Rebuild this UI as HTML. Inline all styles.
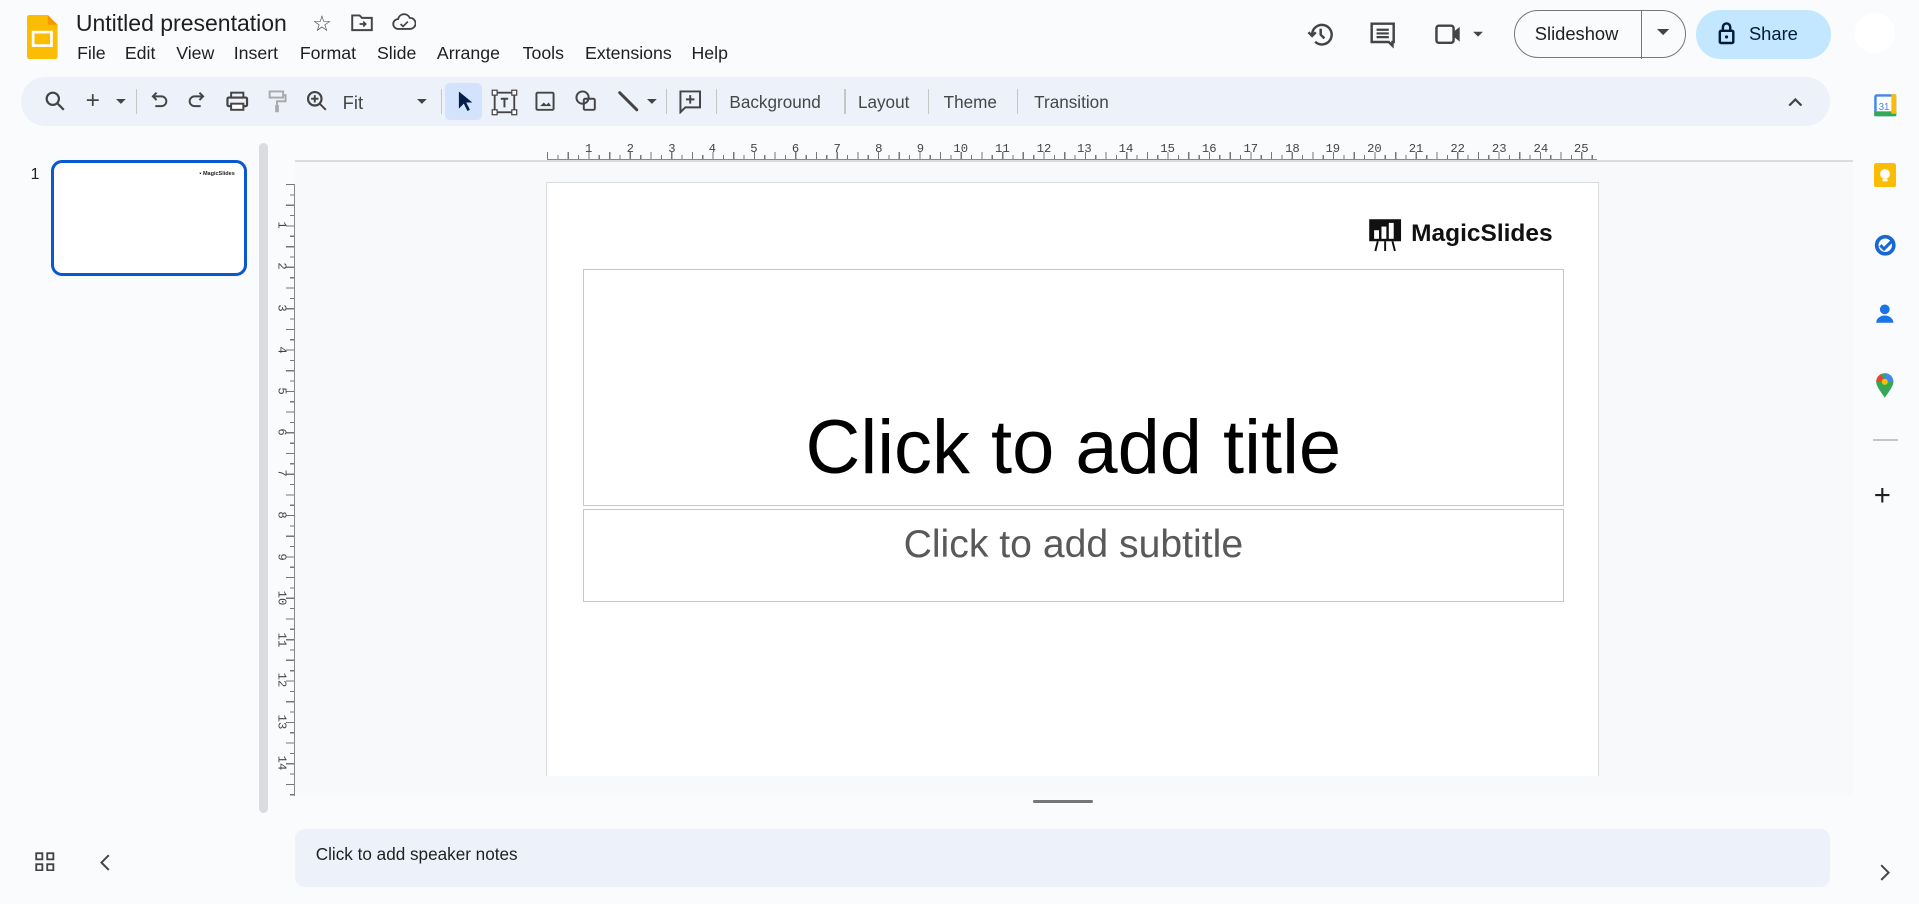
<!DOCTYPE html>
<html><head><meta charset="utf-8"><style>
html,body{margin:0;padding:0;}
body{width:1568px;height:739px;zoom:1.2239;background:#f9fbfd;font-family:"Liberation Sans",Arial,sans-serif;color:#1f1f1f;position:relative;overflow:hidden;}
.a{position:absolute;}
.menu span{position:absolute;top:0;}
.tb{left:17px;top:63px;width:1478px;height:40px;background:#edf2fa;border-radius:20px;}
.ic{position:absolute;top:10px;}
.sep{position:absolute;top:10px;width:1px;height:20px;background:#c4c7c5;}
.tt{position:absolute;top:12px;font-size:14px;color:#444746;}
.hr span{position:absolute;top:1px;font-size:10px;font-family:"Liberation Mono",monospace;color:#444;}
.vr span{position:absolute;left:2px;font-size:10px;font-family:"Liberation Mono",monospace;color:#444;transform:rotate(90deg);}
</style></head><body>
<svg class="a" style="left:22px;top:12px" width="25" height="36" viewBox="0 0 25 36"><path d="M2 0h15l8 8v26a2 2 0 0 1-2 2H2a2 2 0 0 1-2-2V2a2 2 0 0 1 2-2z" fill="#fbbc04"/><path d="M17 0l8 8h-8z" fill="#f29900"/><rect x="5" y="14" width="15" height="11" fill="none" stroke="#fff" stroke-width="2.2"/></svg>
<div class="a" style="left:62px;top:8px;font-size:18.8px;color:#1f1f1f">Untitled presentation</div>
<div class="a" style="left:255px;top:9px;font-size:18px;color:#444">☆</div>
<svg class="a" style="left:287px;top:11px" width="18" height="16" viewBox="0 0 18 16"><path d="M1 2h6l2 2h8v10H1z" fill="none" stroke="#444" stroke-width="1.6"/><path d="M7 9h5M10 7l2 2-2 2" stroke="#444" stroke-width="1.4" fill="none"/></svg>
<svg class="a" style="left:320px;top:11px" width="20" height="15" viewBox="0 0 20 15"><path d="M5 13a4 4 0 0 1 0-8 5 5 0 0 1 9.5-1A4.5 4.5 0 0 1 15 13z" fill="none" stroke="#444" stroke-width="1.5"/><path d="M7 9l2 2 4-4" fill="none" stroke="#444" stroke-width="1.4"/></svg>
<div class="a menu" style="left:0;top:35px;font-size:14.5px;color:#1f1f1f"><span style="left:63px">File</span><span style="left:102px">Edit</span><span style="left:144px">View</span><span style="left:191px">Insert</span><span style="left:245px">Format</span><span style="left:308px">Slide</span><span style="left:357px">Arrange</span><span style="left:427px">Tools</span><span style="left:478px">Extensions</span><span style="left:565px">Help</span></div>
<svg class="a" style="left:1067px;top:16px" width="24" height="24" viewBox="0 0 24 24"><path d="M5 12a8 8 0 1 1 2.5 5.8" fill="none" stroke="#444" stroke-width="2"/><path d="M2 10l3 3 3-3" fill="none" stroke="#444" stroke-width="2"/><path d="M12 7v5l3 3" fill="none" stroke="#444" stroke-width="2"/></svg>
<svg class="a" style="left:1118px;top:16px" width="24" height="24" viewBox="0 0 24 24"><path d="M3 3h18v15h-1v3l-3-3H3z" fill="none" stroke="#444" stroke-width="2"/><path d="M7 8h10M7 11h10M7 14h10" stroke="#444" stroke-width="1.8"/></svg>
<svg class="a" style="left:1172px;top:18px" width="40" height="20" viewBox="0 0 40 20"><rect x="2" y="3" width="14" height="14" rx="2" fill="none" stroke="#444" stroke-width="2"/><path d="M16 8l5-4v12l-5-4z" fill="#444"/><path d="M32 8h8l-4 4z" fill="#444"/></svg>
<div class="a" style="left:1237px;top:8px;width:139px;height:38px;border:1px solid #747775;border-radius:20px;"></div>
<div class="a" style="left:1341px;top:8px;width:1px;height:40px;background:#747775"></div>
<div class="a" style="left:1254px;top:19px;font-size:15px;color:#1f1f1f">Slideshow</div>
<svg class="a" style="left:1354px;top:24px" width="10" height="6"><path d="M0 0h10L5 5z" fill="#444"/></svg>
<div class="a" style="left:1386px;top:8px;width:110px;height:40px;background:#c2e7ff;border-radius:20px;"></div>
<svg class="a" style="left:1404px;top:17px" width="14" height="20" viewBox="0 0 14 20"><rect x="1.5" y="8" width="11" height="10" rx="1" fill="none" stroke="#001d35" stroke-width="2"/><path d="M4 8V5a3 3 0 0 1 6 0v3" fill="none" stroke="#001d35" stroke-width="2"/><circle cx="7" cy="13" r="1.3" fill="#001d35"/></svg>
<div class="a" style="left:1429px;top:19px;font-size:15px;color:#001d35">Share</div>
<div class="a" style="left:1516px;top:11px;width:32px;height:32px;border-radius:50%;background:#fff"></div>
<div class="a tb">
<svg class="ic" style="left:18px" width="20" height="20" viewBox="0 0 20 20"><circle cx="8" cy="8" r="5" fill="none" stroke="#444" stroke-width="1.8"/><path d="M12 12l5 5" stroke="#444" stroke-width="1.8"/></svg>
<div class="tt" style="left:53px;top:8px;font-size:20px">+</div><svg class="ic" style="left:78px;top:18px" width="8" height="5"><path d="M0 0h8L4 4z" fill="#444"/></svg>
<div class="sep" style="left:94px"></div>
<svg class="ic" style="left:104px" width="18" height="20" viewBox="0 0 18 20"><path d="M5 6h6a4 4 0 0 1 0 8H6" fill="none" stroke="#444" stroke-width="1.6"/><path d="M7 3L4 6l3 3" fill="none" stroke="#444" stroke-width="1.6"/></svg>
<svg class="ic" style="left:135px" width="18" height="20" viewBox="0 0 18 20"><path d="M13 6H7a4 4 0 0 0 0 8h5" fill="none" stroke="#444" stroke-width="1.6"/><path d="M11 3l3 3-3 3" fill="none" stroke="#444" stroke-width="1.6"/></svg>
<svg class="ic" style="left:167px" width="20" height="20" viewBox="0 0 20 20"><rect x="2" y="7" width="16" height="7" rx="1" fill="none" stroke="#444" stroke-width="1.8"/><rect x="5" y="3" width="10" height="4" fill="none" stroke="#444" stroke-width="1.6"/><rect x="5" y="12" width="10" height="5" fill="#fff" stroke="#444" stroke-width="1.6"/></svg>
<svg class="ic" style="left:200px" width="18" height="20" viewBox="0 0 18 20"><rect x="3" y="2" width="11" height="5" fill="none" stroke="#aaa" stroke-width="1.6"/><path d="M14 5h2v5H9v3" fill="none" stroke="#aaa" stroke-width="1.6"/><rect x="7.5" y="13" width="3" height="6" fill="#aaa"/></svg>
<svg class="ic" style="left:232px" width="20" height="20" viewBox="0 0 20 20"><circle cx="8" cy="8" r="5.5" fill="none" stroke="#444" stroke-width="1.8"/><path d="M12 12l5 5M8 5v6M5 8h6" stroke="#444" stroke-width="1.6"/></svg>
<div class="tt" style="left:263px;font-size:15px">Fit</div><svg class="ic" style="left:324px;top:18px" width="8" height="5"><path d="M0 0h8L4 4z" fill="#444"/></svg>
<div class="sep" style="left:343px"></div>
<div class="a" style="left:347px;top:5px;width:30px;height:30px;background:#d3e3fd;border-radius:4px"></div>
<svg class="ic" style="left:354px" width="16" height="20" viewBox="0 0 16 20"><path d="M4 2v14l4-4 3 6 2-1-3-6h5z" fill="#041e49"/></svg>
<svg class="ic" style="left:384px" width="22" height="22" viewBox="0 0 22 22"><rect x="3" y="3" width="16" height="16" fill="none" stroke="#444" stroke-width="1.5"/><rect x="1" y="1" width="4" height="4" fill="#fff" stroke="#444"/><rect x="17" y="1" width="4" height="4" fill="#fff" stroke="#444"/><rect x="1" y="17" width="4" height="4" fill="#fff" stroke="#444"/><rect x="17" y="17" width="4" height="4" fill="#fff" stroke="#444"/><path d="M8 8h6M11 8v7" stroke="#444" stroke-width="1.6"/></svg>
<svg class="ic" style="left:419px" width="18" height="20" viewBox="0 0 18 20"><rect x="2" y="3" width="14" height="14" rx="1" fill="none" stroke="#444" stroke-width="1.6"/><path d="M5 14l3-3 2 2 2-2 2 3z" fill="#444"/></svg>
<svg class="ic" style="left:452px" width="20" height="20" viewBox="0 0 20 20"><circle cx="7" cy="7" r="5" fill="none" stroke="#444" stroke-width="1.6"/><rect x="8" y="8" width="9" height="9" rx="1" fill="none" stroke="#444" stroke-width="1.6"/></svg>
<svg class="ic" style="left:486px" width="20" height="20" viewBox="0 0 20 20"><path d="M3 3l14 14" stroke="#444" stroke-width="2.4" stroke-linecap="round"/></svg><svg class="ic" style="left:512px;top:18px" width="8" height="5"><path d="M0 0h8L4 4z" fill="#444"/></svg>
<div class="sep" style="left:527px"></div>
<svg class="ic" style="left:537px" width="20" height="20" viewBox="0 0 20 20"><path d="M2 2h16v13H6l-4 4z" fill="none" stroke="#444" stroke-width="1.6"/><path d="M10 5v7M6.5 8.5h7" stroke="#444" stroke-width="1.6"/></svg>
<div class="sep" style="left:568px"></div>
<div class="tt" style="left:579px">Background</div>
<div class="sep" style="left:673px"></div>
<div class="tt" style="left:684px">Layout</div>
<div class="sep" style="left:741px"></div>
<div class="tt" style="left:754px">Theme</div>
<div class="sep" style="left:814px"></div>
<div class="tt" style="left:828px">Transition</div>
<svg class="ic" style="left:1444px;top:16px" width="12" height="8"><path d="M1 7l5-5 5 5" fill="none" stroke="#444" stroke-width="1.8"/></svg>
</div>
<div class="a" style="left:25px;top:136px;font-size:13px">1</div>
<div class="a" style="left:42px;top:131px;width:155px;height:90px;border:2.5px solid #0b57d0;border-radius:9px;background:#fff"></div>
<div class="a" style="left:163px;top:140px;font-size:4.5px;font-weight:bold">▪ MagicSlides</div>
<div class="a" style="left:212px;top:117px;width:7px;height:547px;background:#dadce0;border-radius:4px"></div>
<div class="a" style="left:241px;top:131px;width:1273px;height:519px;background:#f8f9fa"></div>
<div class="a hr" style="left:447px;top:115px;width:858px;height:16px;background:linear-gradient(#888,#888) bottom/100% 1px no-repeat,repeating-linear-gradient(90deg,#777 0 1px,transparent 1px 8.45px) left bottom/100% 4px no-repeat,repeating-linear-gradient(90deg,#777 0 1px,transparent 1px 16.9px) left bottom/100% 7px no-repeat;">
<span style="left:31px">1</span><span style="left:65px">2</span><span style="left:99px">3</span><span style="left:132px">4</span><span style="left:166px">5</span><span style="left:200px">6</span><span style="left:234px">7</span><span style="left:268px">8</span><span style="left:302px">9</span><span style="left:332px">10</span><span style="left:366px">11</span><span style="left:400px">12</span><span style="left:433px">13</span><span style="left:467px">14</span><span style="left:501px">15</span><span style="left:535px">16</span><span style="left:569px">17</span><span style="left:603px">18</span><span style="left:636px">19</span><span style="left:670px">20</span><span style="left:704px">21</span><span style="left:738px">22</span><span style="left:772px">23</span><span style="left:806px">24</span><span style="left:839px">25</span></div>
<div class="a" style="left:241px;top:131px;width:1273px;height:1px;background:#dadce0"></div>
<div class="a vr" style="left:225px;top:150px;width:16px;height:500px;background:linear-gradient(#888,#888) right/1px 100% no-repeat,repeating-linear-gradient(180deg,#777 0 1px,transparent 1px 8.45px) right top/4px 100% no-repeat,repeating-linear-gradient(180deg,#777 0 1px,transparent 1px 16.9px) right top/7px 100% no-repeat;">
<span style="top:28px">1</span><span style="top:62px">2</span><span style="top:96px">3</span><span style="top:130px">4</span><span style="top:164px">5</span><span style="top:197px">6</span><span style="top:231px">7</span><span style="top:265px">8</span><span style="top:299px">9</span><span style="top:333px;left:-1px">10</span><span style="top:367px;left:-1px">11</span><span style="top:400px;left:-1px">12</span><span style="top:434px;left:-1px">13</span><span style="top:468px;left:-1px">14</span></div>
<div class="a" style="left:446px;top:149px;width:859px;height:484px;background:#fff;border:1px solid #dadce0;border-bottom:none"></div>
<svg class="a" style="left:1118px;top:178px" width="28" height="28" viewBox="0 0 28 28"><rect x="1" y="1" width="26" height="18" fill="#111"/><rect x="5" y="10" width="4" height="7" fill="#fff"/><rect x="11" y="7" width="4" height="10" fill="#fff"/><rect x="17" y="4" width="4" height="13" fill="#fff"/><path d="M8 19l-2 8M14 19v8M20 19l2 8" stroke="#111" stroke-width="1.6"/></svg>
<div class="a" style="left:1153px;top:180px;font-size:20px;font-weight:bold;color:#111">MagicSlides</div>
<div class="a" style="left:476px;top:220px;width:800px;height:192px;border:1px solid #c7c7c7"></div>
<div class="a" style="left:476px;top:330px;width:802px;text-align:center;font-size:62px;color:#000">Click to add title</div>
<div class="a" style="left:476px;top:416px;width:800px;height:74px;border:1px solid #c7c7c7"></div>
<div class="a" style="left:476px;top:427px;width:802px;text-align:center;font-size:32px;color:#595959">Click to add subtitle</div>
<div class="a" style="left:844px;top:654px;width:49px;height:2px;background:#747775;border-radius:1px"></div>
<div class="a" style="left:241px;top:677px;width:1254px;height:48px;background:#edf2fa;border-radius:8px"></div>
<div class="a" style="left:258px;top:690px;font-size:14px">Click to add speaker notes</div>
<svg class="a" style="left:29px;top:696px" width="16" height="16" viewBox="0 0 16 16"><g fill="none" stroke="#444" stroke-width="1.5"><rect x="1" y="1" width="5" height="5"/><rect x="10" y="1" width="5" height="5"/><rect x="1" y="10" width="5" height="5"/><rect x="10" y="10" width="5" height="5"/></g></svg>
<svg class="a" style="left:81px;top:698px" width="10" height="14"><path d="M8 1L2 7l6 6" fill="none" stroke="#444" stroke-width="1.6"/></svg>
<svg class="a" style="left:1530px;top:76px" width="20" height="20" viewBox="0 0 20 20"><rect x="1" y="1" width="18" height="18" rx="2" fill="#4285f4"/><rect x="3" y="3" width="14" height="14" fill="#fff"/><rect x="1" y="15" width="18" height="4" fill="#34a853"/><rect x="15" y="1" width="4" height="16" fill="#fbbc04"/><text x="9" y="14" font-size="8" text-anchor="middle" fill="#4285f4" font-family="Liberation Sans">31</text></svg>
<svg class="a" style="left:1531px;top:133px" width="18" height="20" viewBox="0 0 18 20"><rect x="0" y="0" width="18" height="20" rx="2" fill="#fbbc04"/><circle cx="9" cy="9" r="4" fill="#fff"/><rect x="7" y="13" width="4" height="2" fill="#fff"/></svg>
<svg class="a" style="left:1530px;top:190px" width="20" height="20" viewBox="0 0 20 20"><circle cx="10" cy="10" r="7" fill="none" stroke="#1967d2" stroke-width="3"/><path d="M6 10l3 3 7-7" fill="none" stroke="#1967d2" stroke-width="2.5"/></svg>
<svg class="a" style="left:1532px;top:247px" width="16" height="20" viewBox="0 0 16 20"><circle cx="8" cy="6" r="4" fill="#1a73e8"/><path d="M1 17a7 6 0 0 1 14 0z" fill="#1a73e8"/></svg>
<svg class="a" style="left:1532px;top:304px" width="16" height="22" viewBox="0 0 16 22"><path d="M8 21C3 14 1 11 1 8a7 7 0 0 1 14 0c0 3-2 6-7 13z" fill="#34a853"/><path d="M1 8a7 7 0 0 1 4-6.3L8 8z" fill="#ea4335"/><path d="M8 1a7 7 0 0 1 7 7H8z" fill="#4285f4"/><circle cx="8" cy="8" r="2.5" fill="#fbbc04"/></svg>
<div class="a" style="left:1530px;top:359px;width:21px;height:1px;background:#c4c7c5"></div>
<div class="a" style="left:1531px;top:391px;font-size:24px;color:#1f1f1f">+</div>
<svg class="a" style="left:1536px;top:706px" width="8" height="14"><path d="M1 1l6 6-6 6" fill="none" stroke="#444" stroke-width="1.6"/></svg>
</body></html>
